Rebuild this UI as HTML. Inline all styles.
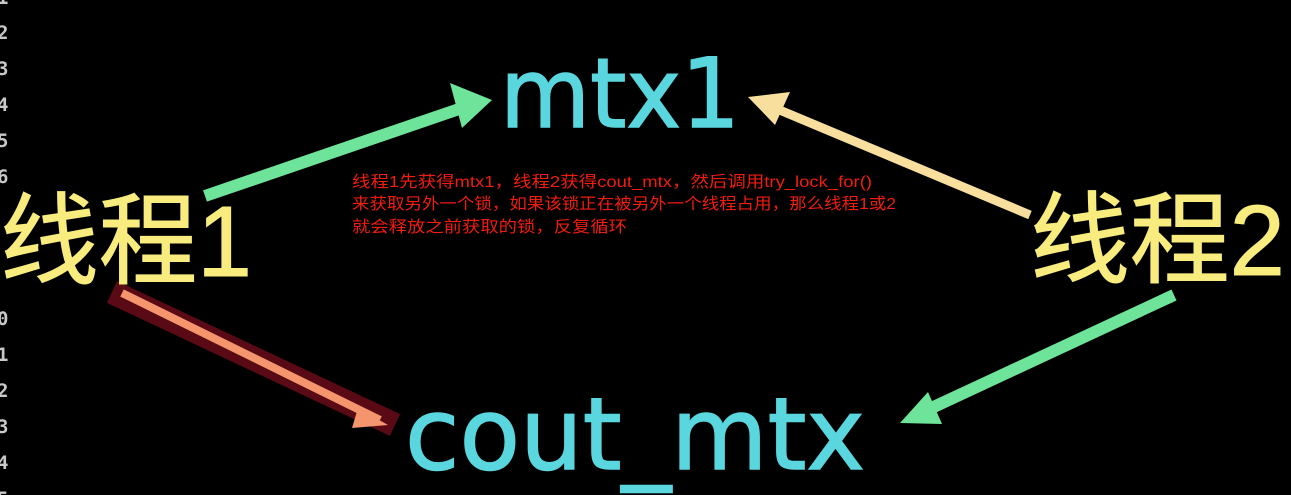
<!DOCTYPE html>
<html><head><meta charset="utf-8"><style>
html,body{margin:0;padding:0;background:#000;width:1291px;height:495px;overflow:hidden}
svg{display:block}
.ln{font-family:"DejaVu Sans Mono","Liberation Mono",monospace;font-size:19px;fill:#c8c8c8;font-weight:bold}
.big{font-family:"DejaVu Sans","Liberation Sans",sans-serif;fill:#5ad6df;stroke:#5ad6df;stroke-width:1.5}
.cn{font-family:"Liberation Sans","Noto Sans CJK SC",sans-serif;fill:#f8ec7e;stroke:#f8ec7e;stroke-width:1}
.red{font-family:"Liberation Sans","Noto Sans CJK SC",sans-serif;font-size:16px;fill:#f01c10}
</style></head><body>
<svg width="1291" height="495" viewBox="0 0 1291 495" xmlns="http://www.w3.org/2000/svg">
<g class="ln">
<text x="-3" y="4">1</text>
<text x="-3" y="39">2</text>
<text x="-3" y="75">3</text>
<text x="-3" y="111">4</text>
<text x="-3" y="147">5</text>
<text x="-3" y="183">6</text>
<text x="-3" y="325">0</text>
<text x="-3" y="361">1</text>
<text x="-3" y="397">2</text>
<text x="-3" y="433">3</text>
<text x="-3" y="469">4</text>
<text x="-3" y="505">5</text>
</g>
<line x1="112" y1="292" x2="395" y2="425" stroke="#5a0a14" stroke-width="24"/>
<line x1="122" y1="293" x2="380" y2="420" stroke="#f4956e" stroke-width="8"/>
<polygon points="388,425 358,408 352,428" fill="#f4956e"/>
<line x1="205" y1="196" x2="462" y2="108" stroke="#6ee49a" stroke-width="12"/>
<polygon points="492,100 450,83 462,128" fill="#6ee49a"/>
<line x1="1030" y1="215" x2="770" y2="106" stroke="#f8df9e" stroke-width="9"/>
<polygon points="748,97 790,92 775,125" fill="#f8df9e"/>
<line x1="1174" y1="295" x2="925" y2="411" stroke="#6ee49a" stroke-width="12"/>
<polygon points="900,423 928,392 942,424" fill="#6ee49a"/>
<text class="big" x="500" y="127" font-size="96" textLength="240" lengthAdjust="spacingAndGlyphs">mtx1</text>
<text class="big" x="405" y="469" font-size="100" textLength="460" lengthAdjust="spacingAndGlyphs">cout_mtx</text>
<text class="cn" x="0" y="276" font-size="100" textLength="252" lengthAdjust="spacingAndGlyphs">线程1</text>
<text class="cn" x="1030" y="275" font-size="100" textLength="255" lengthAdjust="spacingAndGlyphs">线程2</text>
<g class="red">
<text x="352" y="187" textLength="520" lengthAdjust="spacingAndGlyphs">线程1先获得mtx1，线程2获得cout_mtx，然后调用try_lock_for()</text>
<text x="352" y="209" textLength="544" lengthAdjust="spacingAndGlyphs">来获取另外一个锁，如果该锁正在被另外一个线程占用，那么线程1或2</text>
<text x="352" y="232" textLength="275" lengthAdjust="spacingAndGlyphs">就会释放之前获取的锁，反复循环</text>
</g>
</svg>
</body></html>
